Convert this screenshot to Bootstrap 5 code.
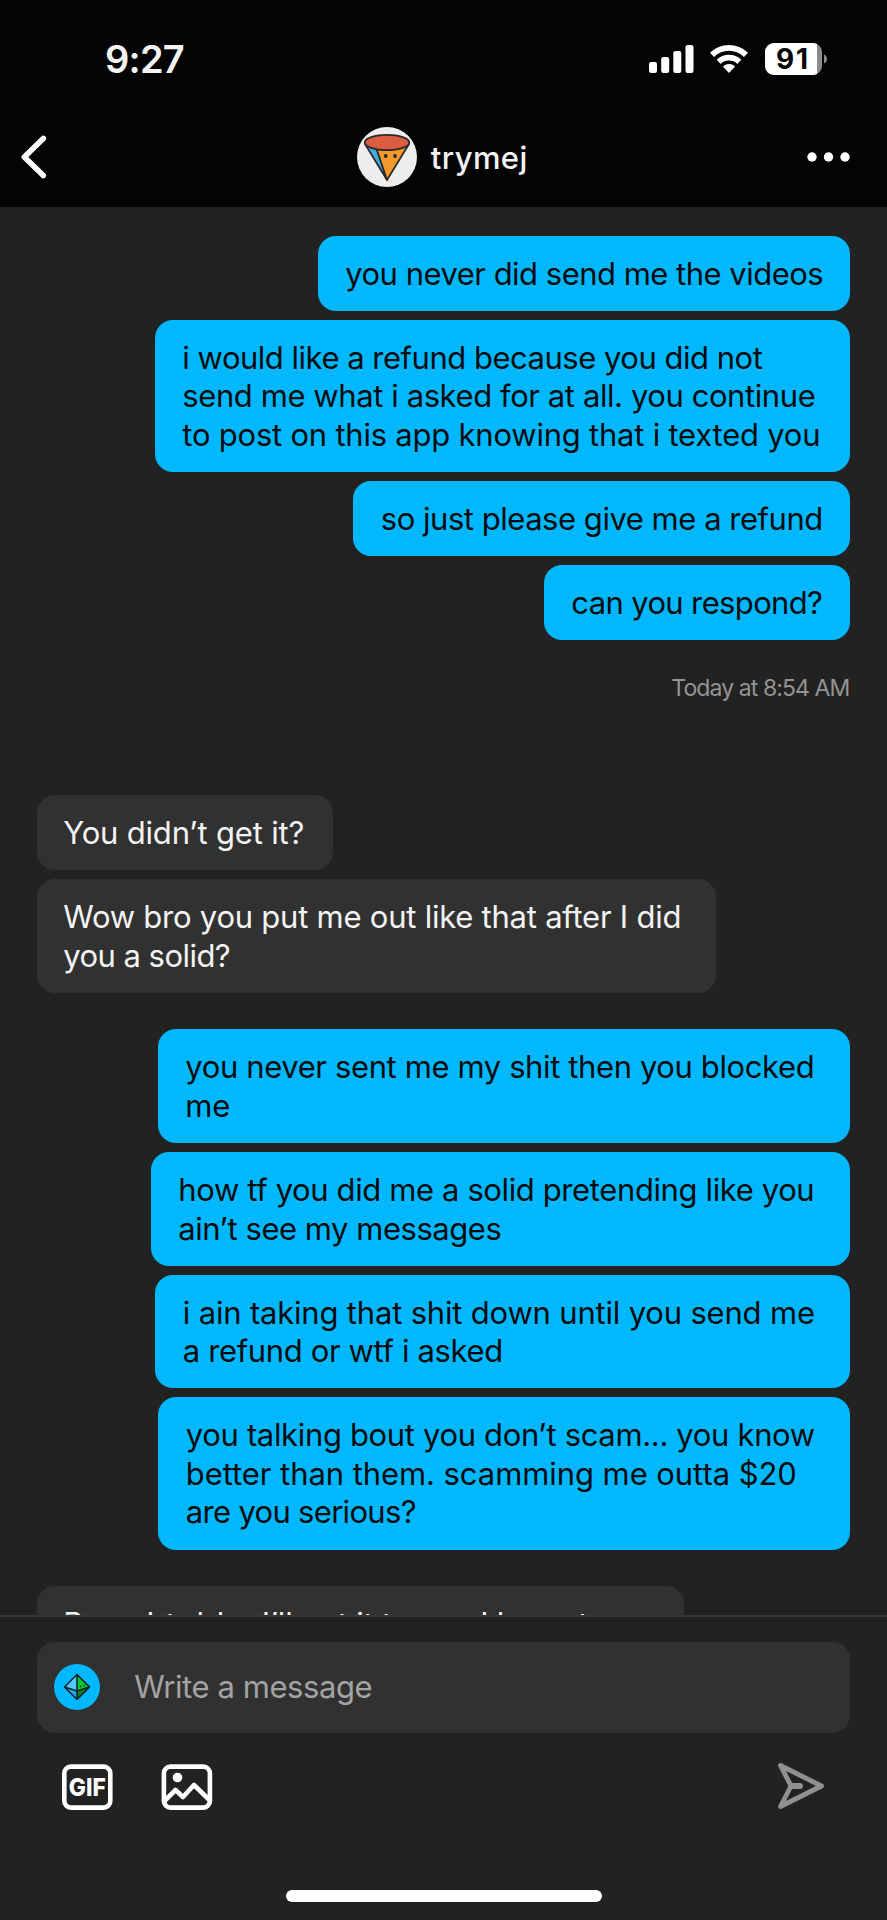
<!DOCTYPE html>
<html lang="en">
<head>
  <meta charset="UTF-8"/>
  <meta name="viewport" content="width=device-width, initial-scale=1.0"/>
  <title>Chat - trymej</title>
  <link href="https://cdn.jsdelivr.net/npm/bootstrap@5.3.0/dist/css/bootstrap.min.css" rel="stylesheet"/>
  <style>
    body { background-color: #222; font-family: Inter, "Liberation Sans", sans-serif; color: #f4f4f4; }
    svg { display: block; flex: none; }
    .phone { width: 887px; height: 1920px; overflow: hidden; }
    .top-area { background-color: #040404; height: 207px; flex: none; }
    .status-bar { height: 118px; padding: 0 60.5px 0 105px; }
    .clock { font-size: 38px; font-weight: 600; line-height: 1; }
    .battery { margin-left: 17px; }
    .chat-nav { height: 78px; padding: 0 37px 0 19px; }
    .back-slot { width: 134px; }
    .menu-slot { width: 118px; }
    .chat-name { font-size: 31px; font-weight: 500; line-height: 38px; margin-left: 13.5px; padding-top: 1px; }
    .thread { height: 1408px; flex: none; overflow: hidden; padding: 28.7px 36.7px 0; gap: 8.85px; }
    .bubble { border-radius: 18px; padding: 19px 0 17.7px 27.5px; font-size: 31px; line-height: 38.55px; white-space: nowrap; flex: none; }
    .bubble-me { background-color: #00b8ff; color: #080b0d; align-self: flex-end; }
    .bubble-them { background-color: #313131; color: #f4f4f4; align-self: flex-start; padding-left: 26.5px; }
    .stamp { color: #949494; font-size: 23px; line-height: 30px; height: 137px; padding: 23.5px 1px 0 0; align-self: flex-end; flex: none; white-space: nowrap; }
    .turn { margin-top: 27.7px; }
    .composer { flex: 1; border-top: 2.5px solid #363636; padding: 24.5px 36.7px 0; }
    .message-box { background-color: #313131; border-radius: 18px; height: 91px; padding-left: 17.5px; color: #a3a3a3; font-size: 31px; white-space: nowrap; }
    .placeholder-text { margin-left: 34px; }
    .tools { padding: 28px 25px 0 24px; }
    .photo-icon { margin-left: 48.5px; }
    .home-bar { width: 316px; height: 12px; border-radius: 6px; background: #fff; margin: 77px auto 0; }
  </style>
</head>
<body>
  <div class="phone d-flex flex-column">
    <header class="top-area">
      <div class="status-bar d-flex align-items-center justify-content-between">
        <span class="clock"><span class="fit" data-width="79">9:27</span></span>
        <div class="d-flex align-items-center">
          <svg width="45" height="28" viewBox="0 0 45 28" fill="#fff">
            <rect x="0" y="17" width="8" height="11" rx="2.2"/>
            <rect x="12.2" y="12" width="8" height="16" rx="2.2"/>
            <rect x="24.3" y="6" width="8" height="22" rx="2.2"/>
            <rect x="36.5" y="0" width="8" height="28" rx="2.2"/>
          </svg>
          <svg class="ms-3" width="38" height="28" viewBox="0 0 38 28" fill="none" stroke="#fff" stroke-width="5.8">
            <path d="M2 9.8A24.5 24.5 0 0 1 36 9.8"/>
            <path d="M8.7 16.8A15 15 0 0 1 29.3 16.8"/>
            <path d="M12.9 21.5a9 9 0 0 1 12.2 0L19 28z" fill="#fff" stroke="none"/>
          </svg>
          <svg class="battery" width="62" height="32" viewBox="0 0 62 32">
            <clipPath id="cell"><rect width="57" height="32" rx="9"/></clipPath>
            <g clip-path="url(#cell)"><rect width="57" height="32" fill="#8b8b8b"/><rect width="52" height="32" fill="#fff"/></g>
            <path d="M59 11.5c4 1.2 4 7.8 0 9z" fill="#8b8b8b"/>
            <text x="27" y="26.3" font-size="28" font-weight="700" text-anchor="middle" textLength="32" fill="#040404">91</text>
          </svg>
        </div>
      </div>
      <div class="chat-nav d-flex align-items-center justify-content-between">
        <div class="back-slot">
          <svg width="30" height="44" viewBox="0 0 30 44" fill="none" stroke="#fff" stroke-width="5.6" stroke-linecap="round" stroke-linejoin="round"><path d="M24.3 3.5L5.3 22L24.3 40.5"/></svg>
        </div>
        <div class="d-flex align-items-center">
          <svg width="60" height="60" viewBox="0 0 60 60">
            <circle cx="30" cy="30" r="30" fill="#ededed"/>
            <g stroke="#29282a" stroke-width="1.7" stroke-linejoin="round">
              <path d="M8 17L30 53L19.5 21z" fill="#45a8dc"/>
              <path d="M19 20L30 53L52 17z" fill="#f39a2d"/>
              <ellipse cx="30" cy="15.5" rx="22.3" ry="7.6" fill="#db5c40"/>
            </g>
            <circle cx="28.7" cy="29" r="1.9" fill="#29282a"/><circle cx="38" cy="29" r="1.9" fill="#29282a"/>
          </svg>
          <span class="chat-name"><span class="fit" data-width="97">trymej</span></span>
        </div>
        <div class="menu-slot d-flex justify-content-end">
          <svg width="43" height="10" viewBox="0 0 43 10" fill="#fff"><circle cx="5" cy="5" r="4.7"/><circle cx="21.5" cy="5" r="4.7"/><circle cx="38" cy="5" r="4.7"/></svg>
        </div>
      </div>
    </header>

    <main id="thread" class="thread d-flex flex-column"></main>

    <footer class="composer">
      <div class="message-box d-flex align-items-center">
        <svg width="46" height="46" viewBox="0 0 46 46">
          <circle cx="23" cy="23" r="23" fill="#00b8ff"/>
          <path d="M23 10.5L10.5 23L23 27z" fill="#4fcbff"/>
          <path d="M23 10.5L35.5 23L23 27z" fill="#08c92f"/>
          <path d="M10.5 23L23 35.5V27z" fill="#1fa9e8"/>
          <path d="M35.5 23L23 35.5V27z" fill="#078023"/>
          <path d="M23 10.5L35.5 23L23 35.5L10.5 23zM23 10.5v25M10.5 23L23 27L35.5 23" fill="none" stroke="#062027" stroke-width="1.5" stroke-linejoin="round"/>
          <path d="M26 22.3h1.2M29.5 21.3h1.2" stroke="#062027" stroke-width="1.2"/>
        </svg>
        <span class="placeholder-text"><span class="fit" data-width="238">Write a message</span></span>
      </div>
      <div class="tools d-flex align-items-center">
        <svg width="52" height="52" viewBox="0 0 52 52">
          <rect x="3.3" y="5.6" width="46" height="41" rx="6.5" fill="none" stroke="#fff" stroke-width="4.6"/>
          <text x="26.3" y="34.7" font-size="24" font-weight="800" text-anchor="middle" textLength="37" lengthAdjust="spacingAndGlyphs" fill="#fff">GIF</text>
        </svg>
        <svg class="photo-icon" width="52" height="52" viewBox="0 0 52 52" fill="none" stroke="#fff" stroke-width="4.6">
          <rect x="2.9" y="5.6" width="46" height="41" rx="6.5"/>
          <circle cx="16.5" cy="16.5" r="4.8" fill="#fff" stroke="none"/>
          <path d="M3.5 40L14.5 29L22 36L33 24L48.5 39" stroke-linejoin="round"/>
        </svg>
        <svg class="ms-auto" width="48" height="50" viewBox="0 0 48 50" fill="none" stroke="#909090" stroke-width="4.8" stroke-linecap="round" stroke-linejoin="round">
          <path d="M3.5 3.5L44.5 24L3.5 44.5L14 24z"/><path d="M14 24h9" stroke-width="6"/>
        </svg>
      </div>
      <div class="home-bar"></div>
    </footer>
  </div>

  <script>
    // from, bubble width, lines as [text, line width]; parts run on in one line
    const messages = [
      { from: "me", width: 532.6, lines: [["you never did send me the videos", 478]] },
      { from: "me", width: 695.5, lines: [["i would like a refund because you did not", 580], ["send me what i asked for at all. you continue", 633], ["to post on this app knowing that i texted you", 638]] },
      { from: "me", width: 497, lines: [["so just please give me a refund", 442]] },
      { from: "me", width: 306.5, lines: [["can you respond?", 251]] },
      { stamp: "Today at 8:54 AM", width: 178 },
      { from: "them", width: 296.5, lines: [["You didn’t get it?", 241]] },
      { from: "them", width: 679.5, lines: [["Wow bro you put me out like that after I did", 618], ["you a solid?", 167]] },
      { from: "me", turn: true, width: 692.5, lines: [["you never sent me my shit then you blocked", 629], ["me", 45]] },
      { from: "me", width: 699.5, lines: [["how tf you did me a solid pretending like you", 636], ["ain’t see my messages", 323]] },
      { from: "me", width: 695, lines: [["i ain taking that shit down until you send me", 632], ["a refund or wtf i asked", 320]] },
      { from: "me", width: 692, lines: [["you talking bout you don’t scam... you know", 629], ["better than them. scamming me outta $20", 611], ["are you serious?", 230]] },
      { from: "them", turn: true, width: 647.5, parts: [["Broo I told ", 172], ["u I’ll get it to you ", 245], ["I be out", 108]] }
    ];

    function displayMessages() {
      const thread = document.getElementById("thread");
      const span = ([text, w]) => `<span class="fit" data-width="${w}">${text}</span>`;
      messages.forEach(msg => {
        const div = document.createElement("div");
        if (msg.stamp) {
          div.className = "stamp";
          div.innerHTML = span([msg.stamp, msg.width]);
        } else {
          div.className = `bubble bubble-${msg.from}` + (msg.turn ? " turn" : "");
          div.style.width = msg.width + "px";
          div.innerHTML = msg.parts ? msg.parts.map(span).join("") : msg.lines.map(span).join("<br>");
        }
        thread.appendChild(div);
      });
    }

    // spread each line to its width with letter spacing
    function fitLines() {
      document.querySelectorAll(".fit").forEach(el => {
        const spare = el.dataset.width - el.getBoundingClientRect().width;
        el.style.letterSpacing = spare / el.textContent.length + "px";
      });
    }

    displayMessages();
    fitLines();
  </script>
</body>
</html>
